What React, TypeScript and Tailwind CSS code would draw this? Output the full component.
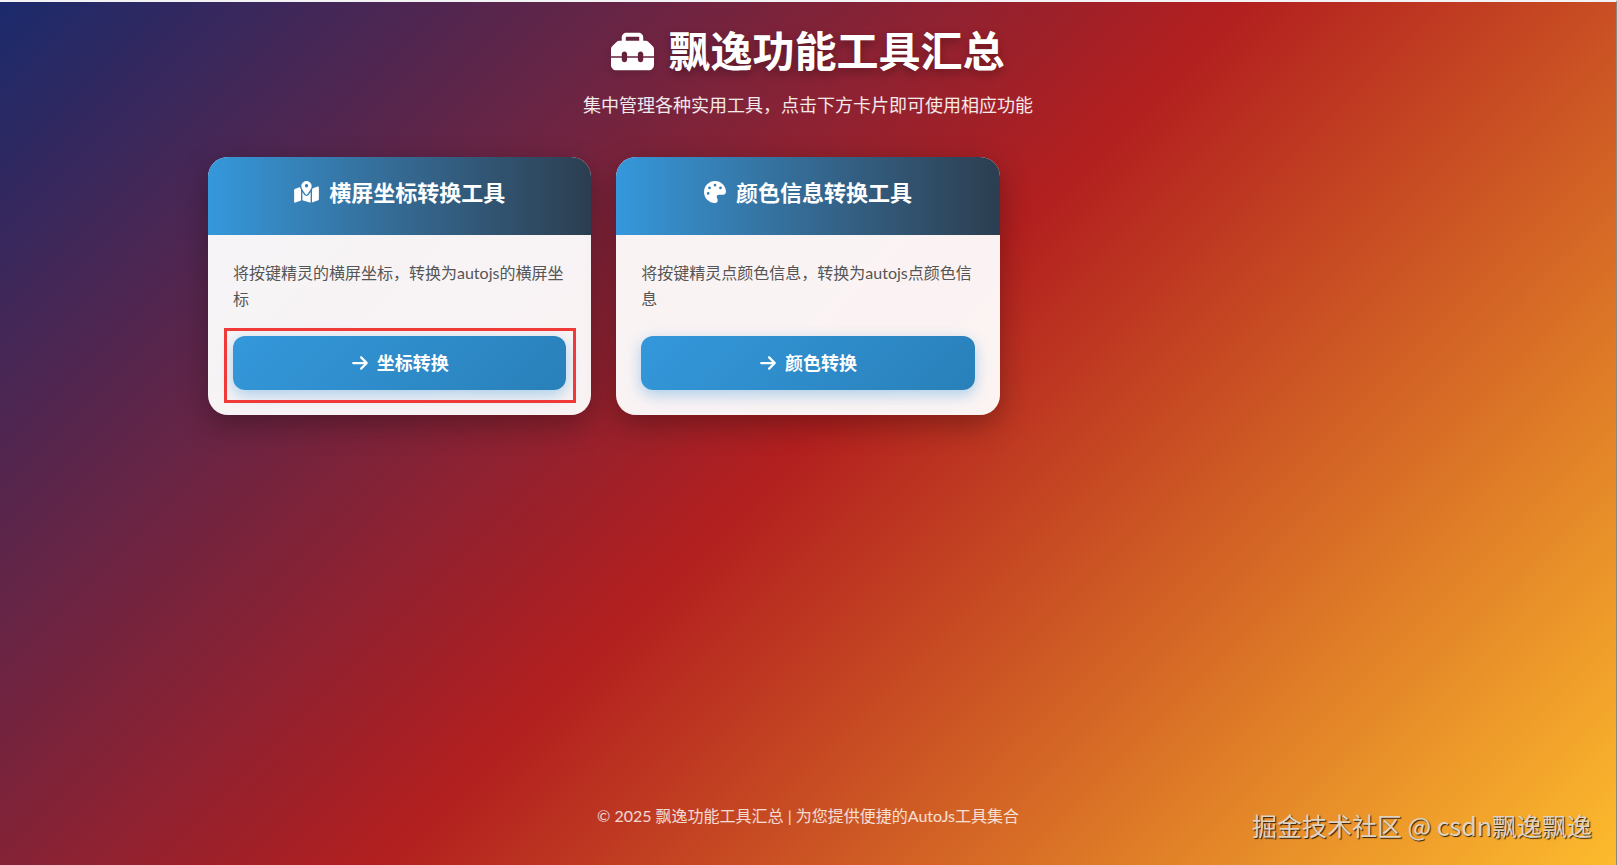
import React from 'react';
import { FaArrowRight, FaMapLocationDot, FaPalette } from 'react-icons/fa6';
import type { IconType } from 'react-icons';

interface Tool {
  title: string;
  description: string;
  action: string;
  icon: IconType;
  iconClass: string;
  highlighted?: boolean;
}

const tools: Tool[] = [
  {
    title: '横屏坐标转换工具',
    description: '将按键精灵的横屏坐标，转换为autojs的横屏坐标',
    action: '坐标转换',
    icon: FaMapLocationDot,
    iconClass: 'h-[22px] w-[25px]',
    highlighted: true,
  },
  {
    title: '颜色信息转换工具',
    description: '将按键精灵点颜色信息，转换为autojs点颜色信息',
    action: '颜色转换',
    icon: FaPalette,
    iconClass: 'h-[22px] w-[22px]',
  },
];

const ToolboxIcon: React.FC<{ className?: string }> = ({ className }) => (
  <svg viewBox="0 0 512 512" fill="currentColor" className={className} aria-hidden="true">
    <path d="M176 88v40h160V88c0-4.4-3.6-8-8-8H184c-4.4 0-8 3.6-8 8zm-48 40V88c0-30.900 25.100-56 56-56h144c30.900 0 56 25.100 56 56v40h28c12.700 0 25 5 34 14l52 52c9 9 14 21 14 34v86H384v-26c0-17.700-14.300-32-32-32s-32 14.300-32 32v26H192v-26c0-17.700-14.300-32-32-32s-32 14.300-32 32v26H0v-86c0-13 5-25 14-34l52-52c9-9 21-14 34-14h28zM0 416v-86h128v22c0 17.700 14.300 32 32 32s32-14.300 32-32v-22h128v22c0 17.700 14.300 32 32 32s32-14.300 32-32v-22h128v86c0 35.300-28.700 64-64 64H64c-35.300 0-64-28.700-64-64z" />
  </svg>
);

const ToolCard: React.FC<{ tool: Tool }> = ({ tool }) => {
  const Icon = tool.icon;

  return (
    <article className="flex flex-col overflow-hidden rounded-[20px] bg-white/95 shadow-[0_10px_30px_rgba(0,0,0,0.3)]">
      <div className="bg-linear-to-r from-[#3498db] to-[#2c3e50] px-6 pt-[18px] pb-[26px] text-white">
        <h2 className="flex h-[34px] items-center justify-center gap-[10px] text-[22px] font-bold">
          <Icon className={tool.iconClass} />
          {tool.title}
        </h2>
      </div>
      <div className="p-[25px]">
        <p className="mb-6 text-base leading-[26px] text-[#555]">{tool.description}</p>
        <div className="relative">
          <a
            href="#"
            className="flex h-[54px] items-center justify-center gap-2 rounded-xl bg-[linear-gradient(135deg,#3498db,#2980b9)] text-lg font-bold text-white shadow-[0_5px_15px_rgba(52,152,219,0.4)]"
          >
            <FaArrowRight />
            {tool.action}
          </a>
          {tool.highlighted && (
            <div className="pointer-events-none absolute -top-2 -right-[10px] -bottom-[13px] -left-[9px] border-3 border-[#f03a3a]" />
          )}
        </div>
      </div>
    </article>
  );
};

const App: React.FC = () => {
  return (
    <div className="relative flex min-h-screen flex-col border-t-2 border-r border-t-[#f3f3f5] border-r-[#8a8580] bg-[linear-gradient(135deg,#1a2a6c,#b21f1f,#fdbb2d)] bg-origin-border font-[Lato,'Noto_Sans_CJK_SC',sans-serif]">
      <div className="mx-auto flex w-full max-w-[1200px] grow flex-col">
        <header className="pt-[18px] text-center text-white">
          <h1 className="flex h-[62px] items-center justify-center gap-[14px] text-[42px] font-bold [text-shadow:0_4px_8px_rgba(0,0,0,0.3)]">
            <ToolboxIcon className="h-[43px] w-[43px] drop-shadow-md" />
            飘逸功能工具汇总
          </h1>
          <p className="mt-[5px] text-lg leading-9 text-white/90">集中管理各种实用工具，点击下方卡片即可使用相应功能</p>
        </header>

        <main className="mt-[34px] grid grid-cols-1 gap-[25px] sm:grid-cols-2 lg:grid-cols-3">
          {tools.map((tool) => (
            <ToolCard key={tool.title} tool={tool} />
          ))}
        </main>

        <footer className="mt-auto pb-9 text-center text-base leading-[26px] text-white/80">
          © 2025 飘逸功能工具汇总 | 为您提供便捷的AutoJs工具集合
        </footer>
      </div>

      <div className="absolute right-6 bottom-[22px] font-['Noto_Sans_CJK_SC',sans-serif] text-[25px] leading-9 text-[#dfd3c3] [text-shadow:1px_1px_1px_rgba(0,0,0,0.8)]">
        掘金技术社区 @ csdn飘逸飘逸
      </div>
    </div>
  );
};

export default App;
